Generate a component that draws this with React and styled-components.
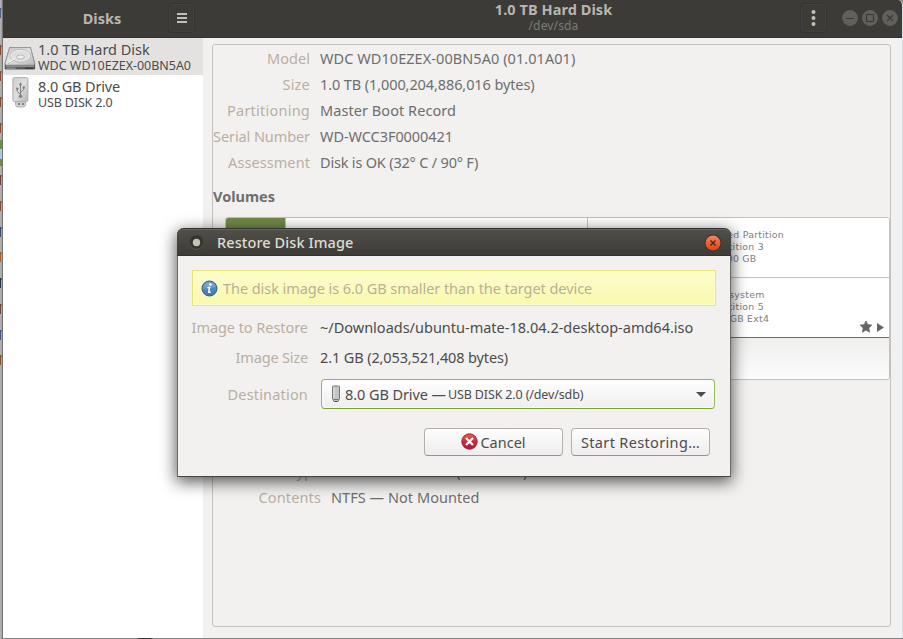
import React from 'react';
import styled, { createGlobalStyle } from 'styled-components';

const GlobalStyle = createGlobalStyle`
  * { box-sizing: border-box; }
  body { margin: 0; overflow: hidden; }
`;

const Desktop = styled.div`
  position: relative;
  display: flex;
  width: 903px;
  height: 639px;
  overflow: hidden;
  background: linear-gradient(90deg, #858482 137px, #333 139px, #333 151px, #858482 153px);
  font-family: "Noto Sans", "Open Sans", sans-serif;
  font-size: 14.5px;
  color: #4c4c4c;
  white-space: nowrap;
`;

const BehindStrip = styled.svg`
  flex: none;
  width: 3px;
  height: 639px;
`;

const Window = styled.div`
  display: flex;
  flex: none;
  flex-direction: column;
  width: 900px;
  height: 638px;
  border-right: 1px solid #dcdfe1;
  background: #f2f1f0;
  border-top-right-radius: 5px;
  overflow: hidden;
`;

const HeaderBar = styled.header`
  display: flex;
  flex: none;
  height: 38px;
  margin-right: -1px;
  background: #3c3b37;
  border-bottom: 1px solid #33322e;
  color: #b9b6ae;
`;

const HeaderSide = styled.div`
  display: flex;
  flex: none;
  align-items: center;
  width: 200px;
  padding: 0 8px 0 0;
`;

const AppTitle = styled.div`
  flex: 1;
  padding: 0 0 2px 33px;
  text-align: center;
  font-weight: 700;
  line-height: 20px;
`;

const HeaderMain = styled.div`
  display: flex;
  align-items: center;
  flex: 1;
`;

const HeaderTitles = styled.div`
  flex: 1;
  padding: 0 0 3px 104px;
  text-align: center;
`;

const DeviceTitle = styled.div`
  font-weight: 700;
  line-height: 17px;
  letter-spacing: 0.07px;
`;

const DevicePath = styled.div`
  font-size: 12px;
  line-height: 15px;
  letter-spacing: 0.15px;
  color: #7d7b75;
`;

const HeaderButton = styled.div`
  display: flex;
  align-items: center;
  justify-content: center;
  width: 27px;
  height: 30px;
  margin-right: ${(p) => p.$gap || 0}px;
  margin-top: -1px;
  border: 1px solid #353430;
  border-radius: 4px;
  box-shadow: inset 0 0 0 1px #42413c;
`;

const WindowControls = styled.div`
  display: flex;
  gap: 4px;
  margin-right: 5px;
  margin-top: -1px;
`;

const Body = styled.div`
  display: flex;
  flex: 1;
  min-height: 0;
`;

const Sidebar = styled.aside`
  flex: none;
  width: 200px;
  background: #fff;
`;

const DeviceRow = styled.div`
  display: flex;
  height: 37px;
  padding: 3px 0 0 1px;
  background: ${(p) => (p.$selected ? '#e4e2e0' : '#fff')};
`;

const DeviceIcon = styled.div`
  display: flex;
  justify-content: center;
  width: 32px;
  margin-right: 2px;
  margin-top: ${(p) => p.$shift}px;
`;

const DeviceName = styled.div`
  line-height: 16px;
  letter-spacing: ${(p) => p.$spacing}px;
`;

const DeviceModel = styled.div`
  font-size: 12.5px;
  line-height: 17px;
  letter-spacing: ${(p) => p.$spacing}px;
`;

const Main = styled.main`
  flex: 1;
  min-width: 0;
  padding: 6px 11px 12px 9px;
`;

const Frame = styled.div`
  height: 583px;
  border: 1px solid #c4c2bf;
  border-radius: 3px;
`;

const Field = styled.div`
  display: grid;
  grid-template-columns: ${(p) => p.$label || 97}px auto;
  column-gap: 10px;
  height: 26px;
  line-height: 26px;
`;

const Label = styled.div`
  display: flex;
  justify-content: flex-end;
  color: #b9afa2;
  letter-spacing: ${(p) => p.$spacing || 0}px;
`;

const Value = styled.div`
  color: ${(p) => (p.$active ? '#4c4c4c' : '#6e6e6e')};
  letter-spacing: ${(p) => p.$spacing || 0}px;
`;

const VolumesTitle = styled.div`
  height: 42px;
  padding-top: 8px;
  line-height: 26px;
  font-weight: 700;
  color: #6e6e6e;
`;

const VolumeBox = styled.div`
  width: 665px;
  height: 163px;
  margin: 0 0 78px 12px;
  border: 1px solid #c4c2bf;
  border-radius: 3px;
  overflow: hidden;
`;

const VolumeGrid = styled.div`
  display: grid;
  grid-template-columns: 362px 1fr;
  height: 120px;
  border-bottom: 1px solid #6b6b69;
  background: #fff;
`;

const FreeSegment = styled.div`
  border-right: 1px solid #c4c2bf;
`;

const UsedBar = styled.div`
  width: 60px;
  height: 119px;
  background: #708a48;
  border-right: 1px solid #c4c2bf;
`;

const PartitionCell = styled.div`
  position: relative;
`;

const Partition = styled.div`
  display: flex;
  flex-direction: column;
  justify-content: center;
  height: 60px;
  padding-bottom: 2px;
  text-align: center;
  font: 9.4px/12px "DejaVu Sans", sans-serif;
  letter-spacing: 0.25px;
  color: #808080;
  border-bottom: ${(p) => (p.$last ? 0 : 1)}px solid #c4c2bf;
`;

const PartitionMarks = styled.svg`
  position: absolute;
  right: 4px;
  bottom: 3px;
  width: 25px;
  height: 14px;
`;

const VolumeToolbar = styled.div`
  height: 42px;
  background: linear-gradient(#efeeed, #fdfdfd);
`;

const Dialog = styled.section`
  position: absolute;
  left: 177px;
  top: 228px;
  width: 554px;
  height: 249px;
  border-radius: 7px 7px 0 0;
  border: 1px solid #45443f;
  border-left-color: #6c6a67;
  border-right-color: #6c6a67;
  border-top: 0;
  background: #f2f1f0;
  box-shadow: 0 4px 16px 1px rgba(0, 0, 0, 0.65);
`;

const DialogTitleBar = styled.header`
  display: flex;
  align-items: center;
  height: 28px;
  margin: 0 -1px;
  padding: 1px 9px 0 11px;
  border-radius: 7px 7px 0 0;
  border-top: 1px solid #34332f;
  border-bottom: 1px solid #33322e;
  background: linear-gradient(#504f49, #3d3c38);
  box-shadow: inset 0 1px 0 #65635d;
`;

const DialogTitle = styled.div`
  flex: 1;
  padding: 0 0 2px 12px;
  line-height: 20px;
  font-weight: 500;
  letter-spacing: 0.09px;
  color: #dfdbd2;
`;

const DialogBody = styled.div`
  padding: 14px 14px 0;
`;

const InfoBar = styled.div`
  display: flex;
  align-items: center;
  gap: 5px;
  height: 36px;
  padding-left: 8px;
  border: 1px solid #e8e66f;
  background: linear-gradient(#fdfdcb, #f9f9ae);
  box-shadow: inset 0 0 0 1px #fdfdd0;
  color: #b9b097;
  letter-spacing: -0.06px;
  margin-bottom: 6px;
`;

const InfoText = styled.div`
  line-height: 20px;
  padding-bottom: 1px;
`;

const DialogField = styled.div`
  display: grid;
  grid-template-columns: 116px 395px;
  column-gap: 12px;
  align-items: center;
  height: 30px;
  line-height: 26px;
  margin-bottom: ${(p) => p.$after || 0}px;
`;

const Combo = styled.div`
  display: flex;
  align-items: center;
  height: 30px;
  margin-left: 1px;
  padding: 0 8px 0 9px;
  border: 1px solid #92bb5b;
  border-bottom-color: #75a52e;
  border-radius: 4px;
  background: linear-gradient(#fff, #efeded);
  box-shadow: inset 0 0 0 1px #fafafa;
  letter-spacing: -0.08px;
`;

const ComboName = styled.span`
  padding-left: 4px;
`;

const ComboDetail = styled.span`
  flex: 1;
  padding: 1px 0 0 2px;
  font-size: 12.5px;
  letter-spacing: -0.14px;
`;

const Actions = styled.div`
  display: flex;
  justify-content: flex-end;
  gap: 8px;
  padding-right: 6px;
`;

const Button = styled.div`
  display: flex;
  align-items: center;
  justify-content: center;
  gap: 2px;
  width: 139px;
  height: 28px;
  padding-bottom: 1px;
  border: 1px solid #b3b1ae;
  border-bottom-color: #969492;
  border-radius: 4px;
  background: linear-gradient(#fefefe, #eeeced);
  letter-spacing: ${(p) => p.$spacing || 0}px;
`;

const backgroundMarks = [
  [13, '#47648c'], [50, '#8a4c28'], [76, '#8a4c28'], [102, '#8a4c28'], [128, '#8a4c28'],
  [180, '#704438'], [206, '#8a4c28'], [232, '#354b69'], [257, '#a7622c'],
  [283, '#28364c'], [309, '#6d4b3b'], [335, '#41558a'], [360, '#8a4c28'],
];

const DesktopEdge = () => (
  <BehindStrip viewBox="0 0 3 639">
    <defs>
      <linearGradient id="edge" x2="1">
        <stop offset="0" stopColor="#bab8b6" />
        <stop offset="1" stopColor="#959391" />
      </linearGradient>
    </defs>
    <rect width="3" height="639" fill="url(#edge)" />
    <rect y="140" width="3" height="26" fill="#6c8e3e" />
    <rect y="149" width="2" height="10" fill="#a9cbe0" />
    {backgroundMarks.map(([y, color]) => (
      <path key={y} d={`M.5 ${y - 5}v10M.5 ${y - 4}h2`} stroke={color} fill="none" />
    ))}
    <path d="M2.5 0v639" stroke="#777573" />
  </BehindStrip>
);

const HardDiskIcon = () => (
  <svg width="33" height="25" viewBox="0 0 33 25">
    <defs>
      <linearGradient id="hd" x2=".8" y2="1">
        <stop offset="0" stopColor="#c8c8c8" />
        <stop offset=".5" stopColor="#e6e6e6" />
        <stop offset="1" stopColor="#bdbdbd" />
      </linearGradient>
    </defs>
    <path d="M5.5 1h22l4.6 16.5v5q0 1.3-1.3 1.3H2q-1.3 0-1.3-1.3v-5z" fill="#5c5c5c" />
    <path d="M5.8 1.3h21.4l4.4 16.5q-.3 1.5-1.6 1.5H2.8q-1.5 0-1.7-1.5z" fill="url(#hd)" stroke="#999" strokeWidth=".8" />
    <ellipse cx="16.8" cy="9.6" rx="10.8" ry="6.6" fill="#dedede" stroke="#bababa" />
    <ellipse cx="16.8" cy="9.6" rx="9.6" ry="5.4" fill="none" stroke="#f5f5f5" strokeWidth=".6" />
    <ellipse cx="17" cy="11" rx="4" ry="2.1" fill="#efefef" stroke="#aaa" strokeWidth=".8" />
    <path d="m5 17 7-4.6" stroke="#f8f8f8" strokeWidth="1.6" />
    <path d="m4 18 8-4.6" stroke="#999" strokeWidth=".6" />
    <path d="M2 20.5h29" stroke="#b8b8b8" strokeWidth=".8" />
    <path d="M3 22.5h9" stroke="#a5a5a5" />
    <path d="M22 22.5h8" stroke="#2c2c2c" />
  </svg>
);

const UsbIcon = () => (
  <svg width="17" height="31" viewBox="0 0 17 31">
    <defs>
      <linearGradient id="usb" x2="1" y2="1">
        <stop offset="0" stopColor="#cfcfcf" />
        <stop offset=".5" stopColor="#dedede" />
        <stop offset="1" stopColor="#b4b4b4" />
      </linearGradient>
    </defs>
    <path d="M3.5 23.5h10v4q0 2.5-2.5 2.5H6q-2.5 0-2.5-2.5z" fill="#d0d0d0" stroke="#b0b0b0" />
    <path d="M6 27h2M10 27h2" stroke="#666" strokeWidth="1.6" />
    <rect x=".9" y=".6" width="15" height="24" rx="1.4" fill="url(#usb)" stroke="#adadad" />
    <path d="M8.5 7.5v11.5M8.5 17.5 5.3 14.4v-2.2M8.5 15.5l3.2-2.7v-2.3" stroke="#808080" fill="none" />
    <path d="m8.5 5.3 1.7 3H6.8z" fill="#808080" />
    <circle cx="8.5" cy="19.3" r="1.7" fill="#808080" />
    <circle cx="5.3" cy="11.7" r="1.2" fill="#808080" />
    <rect x="10.6" y="9.4" width="2.2" height="2.2" fill="#808080" />
  </svg>
);

const StickIcon = () => (
  <svg width="10" height="18" viewBox="0 0 10 18">
    <path d="M2.5 14h5v1.3q0 1.2-1.2 1.2H3.7q-1.2 0-1.2-1.2z" fill="#c8c8c8" stroke="#555" />
    <rect x="1.5" y="1" width="7" height="13.5" rx=".8" fill="#c4c4c4" stroke="#777" />
    <path d="M3 2.5v10" stroke="#e7e7e7" />
  </svg>
);

const ControlIcon = ({ children }) => (
  <svg width="16" height="16" viewBox="0 0 16 16">
    <circle cx="8" cy="8" r="7.9" fill="#62605b" />
    <g fill="none" stroke="#3a3935" strokeWidth="1.1">{children}</g>
  </svg>
);

const InfoIcon = () => (
  <svg width="17" height="17" viewBox="0 0 17 17">
    <defs>
      <linearGradient id="info" y2="1" x2="0">
        <stop offset="0" stopColor="#6f9fce" />
        <stop offset="1" stopColor="#3b73ad" />
      </linearGradient>
    </defs>
    <circle cx="8.5" cy="8.5" r="7.5" fill="url(#info)" stroke="#285c92" />
    <path d="M2.3 8.5a6.3 6.3 0 0 1 12.4-1.2Q8 6.8 2.3 9.5z" fill="#fff" opacity=".15" />
    <circle cx="9.3" cy="4.5" r="1.2" fill="#fff" />
    <path d="M6.5 7.4h2L7.7 12.2h2" fill="none" stroke="#fff" strokeWidth="1.5" />
  </svg>
);

const CancelIcon = () => (
  <svg width="17" height="17" viewBox="0 0 17 17">
    <defs>
      <linearGradient id="cancel" y2="1" x2="0">
        <stop offset="0" stopColor="#e8604e" />
        <stop offset=".5" stopColor="#cf2836" />
        <stop offset="1" stopColor="#a8183e" />
      </linearGradient>
    </defs>
    <circle cx="8.5" cy="8.5" r="7.7" fill="url(#cancel)" stroke="#a21f2f" />
    <path d="m5 5 7 7M12 5l-7 7" stroke="#fff" strokeWidth="2.3" />
  </svg>
);

const DialogMenuIcon = () => (
  <svg width="17" height="19" viewBox="0 0 17 19">
    <circle cx="8.5" cy="9.9" r="6.8" fill="#5c5b56" />
    <circle cx="8.5" cy="9.1" r="6.8" fill="#35342f" />
    <circle cx="8.5" cy="9.5" r="3.7" fill="#c6c1b9" />
  </svg>
);

const DialogCloseIcon = () => (
  <svg width="18" height="18" viewBox="0 0 18 18">
    <defs>
      <linearGradient id="close" y2="1" x2="0">
        <stop offset="0" stopColor="#f48866" />
        <stop offset=".5" stopColor="#ed6034" />
        <stop offset="1" stopColor="#dd4814" />
      </linearGradient>
    </defs>
    <circle cx="9" cy="9" r="8.4" fill="#33312d" />
    <circle cx="9" cy="9" r="7.5" fill="url(#close)" />
    <path d="m6.5 6.5 5 5M11.5 6.5l-5 5" stroke="#3c2a22" strokeWidth="1.3" />
  </svg>
);

const driveFields = [
  ['Model', 'WDC WD10EZEX-00BN5A0 (01.01A01)', 0.05, 0.06],
  ['Size', '1.0 TB (1,000,204,886,016 bytes)', 0.2, -0.1],
  ['Partitioning', 'Master Boot Record', 0.23, 0.06],
  ['Serial Number', 'WD-WCC3F0000421', -0.09, -0.07],
  ['Assessment', 'Disk is OK (32° C / 90° F)', 0.08, -0.19],
];

export default function App() {
  return (
    <>
      <GlobalStyle />
      <Desktop>
        <DesktopEdge />
        <Window>
          <HeaderBar>
            <HeaderSide>
              <AppTitle>Disks</AppTitle>
              <HeaderButton>
                <svg width="10" height="12" viewBox="0 0 10 12">
                  <path d="M0 2h10M0 6h10M0 10h10" stroke="#c2bfb4" strokeWidth="2" />
                </svg>
              </HeaderButton>
            </HeaderSide>
            <HeaderMain>
              <HeaderTitles>
                <DeviceTitle>1.0 TB Hard Disk</DeviceTitle>
                <DevicePath>/dev/sda</DevicePath>
              </HeaderTitles>
              <HeaderButton $gap={15}>
                <svg width="5" height="16" viewBox="0 0 5 16" fill="#c2bfb4">
                  <circle cx="2.5" cy="2" r="2" />
                  <circle cx="2.5" cy="8" r="2" />
                  <circle cx="2.5" cy="14" r="2" />
                </svg>
              </HeaderButton>
              <WindowControls>
                <ControlIcon><path d="M4 8.5h8" /></ControlIcon>
                <ControlIcon><rect x="4.5" y="4.5" width="7" height="7" /></ControlIcon>
                <ControlIcon><path d="m5 5 6 6M11 5l-6 6" /></ControlIcon>
              </WindowControls>
            </HeaderMain>
          </HeaderBar>
          <Body>
            <Sidebar>
              <DeviceRow $selected>
                <DeviceIcon $shift={5}><HardDiskIcon /></DeviceIcon>
                <div>
                  <DeviceName $spacing={0}>1.0 TB Hard Disk</DeviceName>
                  <DeviceModel $spacing={-0.03}>WDC WD10EZEX-00BN5A0</DeviceModel>
                </div>
              </DeviceRow>
              <DeviceRow>
                <DeviceIcon $shift={-1}><UsbIcon /></DeviceIcon>
                <div>
                  <DeviceName $spacing={-0.15}>8.0 GB Drive</DeviceName>
                  <DeviceModel $spacing={-0.14}>USB DISK 2.0</DeviceModel>
                </div>
              </DeviceRow>
            </Sidebar>
            <Main>
              <Frame>
                {driveFields.map(([label, value, ls, vs]) => (
                  <Field key={label}>
                    <Label $spacing={ls}>{label}</Label>
                    <Value $spacing={vs}>{value}</Value>
                  </Field>
                ))}
                <VolumesTitle>Volumes</VolumesTitle>
                <VolumeBox>
                  <VolumeGrid>
                    <FreeSegment><UsedBar /></FreeSegment>
                    <PartitionCell>
                      <Partition>
                        <div>Extended Partition</div>
                        <div>Partition 3</div>
                        <div>500 GB</div>
                      </Partition>
                      <Partition $last>
                        <div>Filesystem</div>
                        <div>Partition 5</div>
                        <div>500 GB Ext4</div>
                      </Partition>
                      <PartitionMarks viewBox="0 0 25 14" fill="#666">
                        <path d="m6 0 1.7 3.7 4.1.4-3 2.8.8 4.3L6 9l-3.6 2.2.8-4.3-3-2.8 4.1-.4z" stroke="#666" strokeWidth=".8" />
                        <path d="M17 2v9l7-4.5z" />
                      </PartitionMarks>
                    </PartitionCell>
                  </VolumeGrid>
                  <VolumeToolbar />
                </VolumeBox>
                <Field $label={108}>
                  <Label>Type</Label>
                  <Value $spacing={0.13}>NTFS/exFAT/HPFS (Bootable)</Value>
                </Field>
                <Field $label={108}>
                  <Label $spacing={0.13}>Contents</Label>
                  <Value $spacing={0.05}>NTFS — Not Mounted</Value>
                </Field>
              </Frame>
            </Main>
          </Body>
        </Window>

        <Dialog>
          <DialogTitleBar>
            <DialogMenuIcon />
            <DialogTitle>Restore Disk Image</DialogTitle>
            <DialogCloseIcon />
          </DialogTitleBar>
          <DialogBody>
            <InfoBar>
              <InfoIcon />
              <InfoText>The disk image is 6.0 GB smaller than the target device</InfoText>
            </InfoBar>
            <DialogField>
              <Label $spacing={-0.05}>Image to Restore</Label>
              <Value $active>~/Downloads/ubuntu-mate-18.04.2-desktop-amd64.iso</Value>
            </DialogField>
            <DialogField $after={7}>
              <Label $spacing={-0.17}>Image Size</Label>
              <Value $active $spacing={-0.12}>2.1 GB (2,053,521,408 bytes)</Value>
            </DialogField>
            <DialogField $after={19}>
              <Label $spacing={0.18}>Destination</Label>
              <Combo>
                <StickIcon />
                <ComboName>8.0 GB Drive —</ComboName>
                <ComboDetail>USB DISK 2.0 (/dev/sdb)</ComboDetail>
                <svg width="10" height="5" viewBox="0 0 10 5"><path d="M0 0h10L5 5z" fill="#4c4c4c" /></svg>
              </Combo>
            </DialogField>
            <Actions>
              <Button><CancelIcon />Cancel</Button>
              <Button $spacing={0.34}>Start Restoring…</Button>
            </Actions>
          </DialogBody>
        </Dialog>
      </Desktop>
    </>
  );
}
